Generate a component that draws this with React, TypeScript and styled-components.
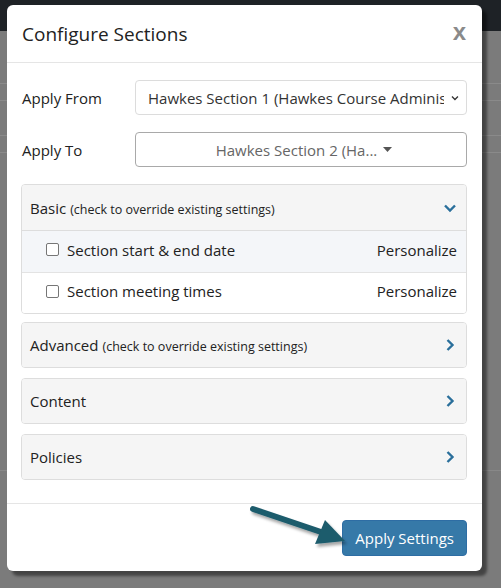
import React from "react";
import styled, { createGlobalStyle } from "styled-components";

const Global = createGlobalStyle`
  html, body { margin: 0; padding: 0; }
  body { font-family: "Open Sans", "Noto Sans", sans-serif; background: #7b7b7b; }
  * { box-sizing: border-box; }
`;

const Page = styled.div`
  position: relative;
  width: 501px;
  height: 588px;
  overflow: hidden;
  background:
    linear-gradient(#1e2226, #1e2226) 0 0 / 100% 31px no-repeat,
    linear-gradient(#8a8a8a, #8a8a8a) 0 83px / 100% 1px no-repeat,
    linear-gradient(#8a8a8a, #8a8a8a) 0 100px / 100% 1px no-repeat,
    linear-gradient(#8a8a8a, #8a8a8a) 0 135px / 100% 1px no-repeat,
    linear-gradient(#8a8a8a, #8a8a8a) 0 152px / 100% 1px no-repeat,
    linear-gradient(#888, #888) 0 470px / 100% 1px no-repeat,
    #7b7b7b;
  padding: 5px 0 0 7px;
`;

const Modal = styled.div`
  width: 475px;
  height: 566px;
  background: #fff;
  border-radius: 6px;
  box-shadow: 5px 5px 3px rgba(0, 0, 0, 0.45);
  display: flex;
  flex-direction: column;
`;

const Header = styled.div`
  height: 58px;
  padding: 0 15px;
  border-bottom: 1px solid #e5e5e5;
  display: flex;
  align-items: center;
  justify-content: space-between;
`;

const Title = styled.h4`
  margin: 0;
  font-size: 19px;
  font-weight: 400;
  color: #222;
`;

const Close = styled.span`
  font-family: "Liberation Sans", Arial, sans-serif;
  font-size: 24px;
  font-weight: 700;
  color: #8a8a8a;
  margin-right: 1px;
  margin-top: -3px;
`;

const Body = styled.div`
  padding: 17px 15px 0 14px;
  flex: 1;
  display: flex;
  flex-direction: column;
`;

const FormRow = styled.div`
  display: flex;
  align-items: center;
  margin-bottom: 17px;
  margin-left: 1px;
`;

const Label = styled.label`
  width: 113px;
  flex: none;
  font-size: 15px;
  color: #222;
`;

const SelectBox = styled.div<{ $centered?: boolean; $dark?: boolean }>`
  flex: 1;
  height: 35px;
  border: 1px solid ${(p) => (p.$dark ? "#a9a9a9" : "#dcdcdc")};
  border-radius: 4px;
  display: flex;
  align-items: center;
  justify-content: ${(p) => (p.$centered ? "center" : "space-between")};
  padding: 0 6px 0 12px;
  font-size: 15px;
  color: ${(p) => (p.$centered ? "#666" : "#333")};
  white-space: nowrap;
  overflow: hidden;
  gap: 6px;
`;

const SelectText = styled.span`
  overflow: hidden;
  white-space: nowrap;
`;

const Panel = styled.div<{ $gap?: number }>`
  border: 1px solid #dddddd;
  border-radius: 4px;
  margin-bottom: ${(p) => p.$gap ?? 10}px;
  overflow: hidden;
`;

const PanelHeader = styled.div<{ $open?: boolean }>`
  height: ${(p) => (p.$open ? 46 : 44)}px;
  background: #f5f5f5;
  border-bottom: ${(p) => (p.$open ? "1px solid #dddddd" : "none")};
  display: flex;
  align-items: center;
  justify-content: space-between;
  padding: 0 9px 0 8px;
  color: #222;
  font-size: 15px;
`;

const Small = styled.span`
  font-size: 12.5px;
  margin-left: 4px;
`;

const Row = styled.div<{ $shade?: boolean }>`
  height: 41px;
  display: flex;
  align-items: center;
  justify-content: space-between;
  padding: 0 9px 4px 24px;
  background: ${(p) => (p.$shade ? "#f4f6f9" : "#fff")};
  border-top: ${(p) => (p.$shade ? "none" : "1px solid #e3e3e3")};
  font-size: 15px;
  color: #222;
`;

const CheckLabel = styled.span`
  display: flex;
  align-items: center;
  gap: 8px;
`;

const Box = styled.span`
  width: 13px;
  height: 13px;
  border: 1px solid #767676;
  border-radius: 2px;
  background: #fff;
  display: inline-block;
`;

const Footer = styled.div`
  position: relative;
  border-top: 1px solid #e5e5e5;
  height: 68px;
  display: flex;
  align-items: center;
  justify-content: flex-end;
  padding: 0 15px;
`;

const Button = styled.button`
  height: 36px;
  padding: 0 12px;
  background: #3679a8;
  border: 1px solid #2e6da4;
  border-radius: 4px;
  color: #fff;
  font-family: "Open Sans", sans-serif;
  font-size: 15px;
`;

const ArrowSvg = styled.svg`
  position: absolute;
  left: 228px;
  top: -8px;
  overflow: visible;
`;

const Chevron = ({ dir }: { dir: "down" | "right" }) => (
  <svg width="14" height="14" viewBox="0 0 14 14">
    {dir === "down" ? (
      <path d="M2 4.5 L7 9.5 L12 4.5" fill="none" stroke="#2a6f9b" strokeWidth="2.4" />
    ) : (
      <path d="M4.5 2 L9.5 7 L4.5 12" fill="none" stroke="#2a6f9b" strokeWidth="2.4" />
    )}
  </svg>
);

const SmallChevron = () => (
  <svg width="10" height="10" viewBox="0 0 10 10">
    <path d="M2 3.5 L5 6.5 L8 3.5" fill="none" stroke="#333" strokeWidth="1.3" />
  </svg>
);

const Caret = () => (
  <svg width="9" height="6" viewBox="0 0 9 6">
    <path d="M0 0 L9 0 L4.5 5 Z" fill="#555" />
  </svg>
);

export default function App() {
  return (
    <Page>
      <Global />
      <Modal>
        <Header>
          <Title>Configure Sections</Title>
          <Close>x</Close>
        </Header>
        <Body>
          <FormRow>
            <Label>Apply From</Label>
            <SelectBox>
              <SelectText>Hawkes Section 1 (Hawkes Course Adminis</SelectText>
              <SmallChevron />
            </SelectBox>
          </FormRow>
          <FormRow>
            <Label>Apply To</Label>
            <SelectBox $centered $dark>
              <SelectText>Hawkes Section 2 (Ha...</SelectText>
              <Caret />
            </SelectBox>
          </FormRow>
          <Panel $gap={8}>
            <PanelHeader $open>
              <span>
                Basic<Small>(check to override existing settings)</Small>
              </span>
              <Chevron dir="down" />
            </PanelHeader>
            <Row $shade>
              <CheckLabel>
                <Box />
                Section start &amp; end date
              </CheckLabel>
              <span>Personalize</span>
            </Row>
            <Row>
              <CheckLabel>
                <Box />
                Section meeting times
              </CheckLabel>
              <span>Personalize</span>
            </Row>
          </Panel>
          <Panel>
            <PanelHeader>
              <span>
                Advanced<Small>(check to override existing settings)</Small>
              </span>
              <Chevron dir="right" />
            </PanelHeader>
          </Panel>
          <Panel>
            <PanelHeader>
              <span>Content</span>
              <Chevron dir="right" />
            </PanelHeader>
          </Panel>
          <Panel>
            <PanelHeader>
              <span>Policies</span>
              <Chevron dir="right" />
            </PanelHeader>
          </Panel>
        </Body>
        <Footer>
          <ArrowSvg width="120" height="50" viewBox="0 0 120 50">
            <defs>
              <filter id="sh" x="-20%" y="-20%" width="150%" height="160%">
                <feDropShadow dx="2" dy="3" stdDeviation="1.5" floodColor="#000" floodOpacity="0.35" />
              </filter>
            </defs>
            <g filter="url(#sh)">
              <line x1="18" y1="13" x2="86" y2="36" stroke="#1d5b6c" strokeWidth="6" strokeLinecap="round" />
              <path d="M110 45 L80 48 L90 24 Z" fill="#1d5b6c" />
            </g>
          </ArrowSvg>
          <Button>Apply Settings</Button>
        </Footer>
      </Modal>
    </Page>
  );
}
